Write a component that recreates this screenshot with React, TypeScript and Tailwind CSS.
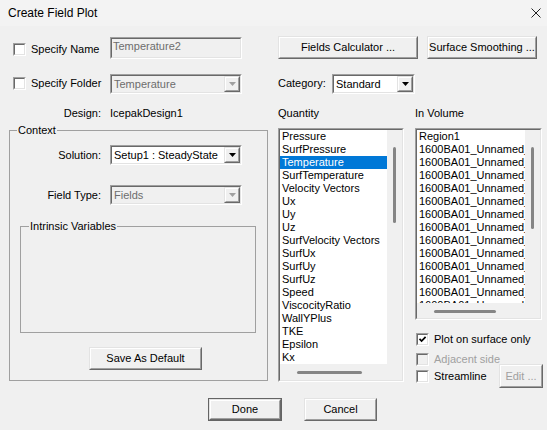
import React from "react";

const quantities = [
  "Pressure",
  "SurfPressure",
  "Temperature",
  "SurfTemperature",
  "Velocity Vectors",
  "Ux",
  "Uy",
  "Uz",
  "SurfVelocity Vectors",
  "SurfUx",
  "SurfUy",
  "SurfUz",
  "Speed",
  "ViscocityRatio",
  "WallYPlus",
  "TKE",
  "Epsilon",
  "Kx",
];

const volumes = ["Region1", ...Array.from({ length: 13 }, () => "1600BA01_Unnamed_")];

function Sunken({
  className = "",
  inner = "",
  children,
}: {
  className?: string;
  inner?: string;
  children?: React.ReactNode;
}) {
  return (
    <div className={`border border-t-[#a0a0a0] border-l-[#a0a0a0] border-r-white border-b-white ${className}`}>
      <div
        className={`h-full w-full border border-t-[#696969] border-l-[#696969] border-r-[#e3e3e3] border-b-[#e3e3e3] ${inner}`}
      >
        {children}
      </div>
    </div>
  );
}

function Raised({ className = "", children }: { className?: string; children?: React.ReactNode }) {
  return (
    <div className={`border border-t-[#e3e3e3] border-l-[#e3e3e3] border-r-[#696969] border-b-[#696969] bg-[#f0f0f0] ${className}`}>
      <div className="flex h-full w-full items-center justify-center border border-t-white border-l-white border-r-[#a0a0a0] border-b-[#a0a0a0]">
        {children}
      </div>
    </div>
  );
}

function Button({
  label,
  className = "",
  isDefault = false,
  disabled = false,
}: {
  label: string;
  className?: string;
  isDefault?: boolean;
  disabled?: boolean;
}) {
  const face = (
    <Raised className="h-full w-full">
      <span className={disabled ? "text-[#a0a0a0]" : "text-black"}>{label}</span>
    </Raised>
  );
  if (isDefault) {
    return <div className={`border border-[#646464] ${className}`}>{face}</div>;
  }
  return <div className={className}>{face}</div>;
}

function Checkbox({ checked = false, disabled = false }: { checked?: boolean; disabled?: boolean }) {
  return (
    <Sunken className="h-[13px] w-[13px] shrink-0" inner={`flex items-center justify-center ${disabled ? "bg-[#f0f0f0]" : "bg-white"}`}>
      {checked && (
        <svg width="9" height="9" viewBox="0 0 9 9">
          <path d="M1.5 3.8 L3.6 6 L7.6 1.8" stroke="#000" strokeWidth="1.7" fill="none" />
        </svg>
      )}
    </Sunken>
  );
}

function Combo({ value, className = "", disabled = false }: { value: string; className?: string; disabled?: boolean }) {
  return (
    <Sunken className={`h-[20px] shrink-0 ${className}`} inner={`flex items-stretch ${disabled ? "bg-[#f0f0f0]" : "bg-white"}`}>
      <div className={`flex-1 overflow-hidden whitespace-nowrap pl-[2px] leading-[16px] ${disabled ? "text-[#6d6d6d]" : "text-black"}`}>
        {value}
      </div>
      <Raised className="w-[16px]">
        <svg width="7" height="4" viewBox="0 0 7 4">
          <path d="M0 0H7L3.5 4Z" fill={disabled ? "#a0a0a0" : "#000"} />
        </svg>
      </Raised>
    </Sunken>
  );
}

function ListBox({
  items,
  selected = -1,
  className = "",
  hBar,
  vThumb,
  hThumb,
}: {
  items: string[];
  selected?: number;
  className?: string;
  hBar: string;
  vThumb: string;
  hThumb: string;
}) {
  return (
    <Sunken className={className} inner="flex flex-col bg-[#f0f0f0]">
      <div className="flex min-h-0 flex-1">
        <div className="flex-1 overflow-hidden bg-white">
          {items.map((item, i) => (
            <div
              key={i}
              className={`h-[13px] whitespace-nowrap pl-[2px] leading-[13px] ${
                i === selected ? "bg-[#0078d7] text-white" : "text-black"
              }`}
            >
              {item}
            </div>
          ))}
        </div>
        <div className="flex w-[15px] flex-col items-center pt-[17px]">
          <div className={`w-[3px] rounded-full bg-[#858585] ${vThumb}`} />
        </div>
      </div>
      <div className={`flex ${hBar}`}>
        <div className="flex-1 pl-[17px] pt-[7px]">
          <div className={`h-[3px] rounded-full bg-[#858585] ${hThumb}`} />
        </div>
        <div className="w-[15px]" />
      </div>
    </Sunken>
  );
}

function CheckLabel({ label, checked = false, disabled = false }: { label: string; checked?: boolean; disabled?: boolean }) {
  return (
    <div className="flex items-center gap-[5px]">
      <Checkbox checked={checked} disabled={disabled} />
      <span className={disabled ? "text-[#a0a0a0]" : "text-black"}>{label}</span>
    </div>
  );
}

export default function App() {
  return (
    <div className="flex h-[430px] w-[547px] flex-col overflow-hidden bg-[#f0f0f0] font-['Liberation_Sans',Arial,sans-serif] text-[11px] leading-[13px] text-black">
      {/* Title bar */}
      <div className="flex h-[26px] shrink-0 items-center justify-between bg-[#f3f3f3] pl-[8px] pr-[6px]">
        <span className="text-[12px]">Create Field Plot</span>
        <svg width="10" height="10" viewBox="0 0 10 10">
          <path d="M0.5 0.5L9.5 9.5M9.5 0.5L0.5 9.5" stroke="#222" strokeWidth="1" />
        </svg>
      </div>

      <div className="flex h-[363px] shrink-0 items-start">
        {/* Left column */}
        <div className="ml-[9px] flex w-[259px] flex-col">
          <div className="mt-[10px] flex h-[23px] items-center pl-[4px]">
            <div className="mt-[4px] w-[97px]">
              <CheckLabel label="Specify Name" />
            </div>
            <Sunken className="h-[22px] w-[132px]" inner="bg-[#f0f0f0] pl-[1px] leading-[14px] text-[#6d6d6d]">
              Temperature2
            </Sunken>
          </div>
          <div className="mt-[13px] flex h-[23px] items-center pl-[4px]">
            <div className="w-[97px]">
              <CheckLabel label="Specify Folder" />
            </div>
            <Combo value="Temperature" className="w-[132px]" disabled />
          </div>
          <div className="mt-[11px] flex h-[14px] items-center">
            <span className="w-[92px] text-right">Design:</span>
            <span className="ml-[9px]">IcepakDesign1</span>
          </div>

          {/* Context */}
          <fieldset className="mt-[4px] flex h-[257px] flex-col border border-[#a0a0a0]">
            <legend className="ml-[7px] px-[1px] leading-[13px]">Context</legend>
            <div className="mt-[8px] flex h-[20px] items-center">
              <span className="w-[91px] text-right">Solution:</span>
              <Combo value="Setup1 : SteadyState" className="ml-[9px] w-[132px]" />
            </div>
            <div className="mt-[20px] flex h-[20px] items-center">
              <span className="w-[91px] text-right">Field Type:</span>
              <Combo value="Fields" className="ml-[9px] w-[132px]" disabled />
            </div>
            <fieldset className="ml-[10px] mt-[15px] h-[113px] w-[236px] border border-[#a0a0a0]">
              <legend className="ml-[8px] px-[1px] leading-[13px]">Intrinsic Variables</legend>
            </fieldset>
            <Button label="Save As Default" className="ml-[79px] mt-[14px] h-[23px] w-[113px]" />
          </fieldset>
        </div>

        {/* Right column */}
        <div className="ml-[10px] flex flex-col">
          <div className="mt-[10px] flex h-[23px] items-center">
            <Button label="Fields Calculator ..." className="h-[23px] w-[140px]" />
            <Button label="Surface Smoothing ..." className="ml-[9px] h-[23px] w-[110px]" />
          </div>
          <div className="mt-[13px] flex h-[23px] items-center">
            <span className="w-[54px]">Category:</span>
            <Combo value="Standard" className="w-[83px]" />
          </div>
          <div className="mt-[11px] flex h-[14px] items-center">
            <span className="w-[137px]">Quantity</span>
            <span>In Volume</span>
          </div>
          <div className="mt-[8px] flex items-start">
            <ListBox
              items={quantities}
              selected={2}
              className="h-[254px] w-[126px]"
              hBar="h-[16px]"
              vThumb="h-[76px]"
              hThumb="w-[65px]"
            />
            <div className="ml-[11px] flex w-[128px] flex-col">
              <ListBox
                items={volumes}
                className="h-[192px] w-[127px]"
                hBar="h-[15px]"
                vThumb="h-[82px]"
                hThumb="w-[62px]"
              />
              <div className="ml-[1px] mt-[13px]">
                <CheckLabel label="Plot on surface only" checked />
              </div>
              <div className="ml-[1px] mt-[7px]">
                <CheckLabel label="Adjacent side" disabled />
              </div>
              <div className="ml-[1px] mt-[-2px] flex h-[24px] items-center justify-between">
                <CheckLabel label="Streamline" />
                <Button label="Edit ..." className="h-[24px] w-[44px]" disabled />
              </div>
            </div>
          </div>
        </div>
      </div>

      {/* Bottom buttons */}
      <div className="mt-[9px] flex pl-[208px]">
        <Button label="Done" className="h-[23px] w-[74px]" isDefault />
        <Button label="Cancel" className="ml-[22px] h-[23px] w-[73px]" />
      </div>
    </div>
  );
}
